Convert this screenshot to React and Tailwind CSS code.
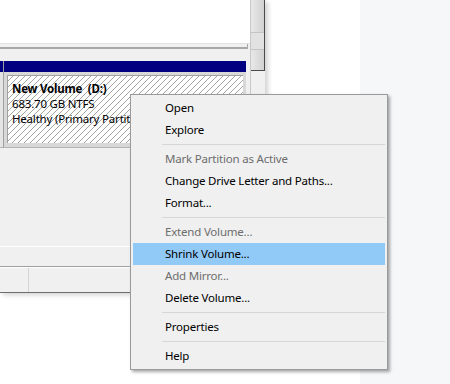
import React from "react";

const items = [
  { t: "Open" },
  { t: "Explore" },
  { sep: true },
  { t: "Mark Partition as Active", d: true },
  { t: "Change Drive Letter and Paths..." },
  { t: "Format..." },
  { sep: true },
  { t: "Extend Volume...", d: true },
  { t: "Shrink Volume...", h: true },
  { t: "Add Mirror...", d: true },
  { t: "Delete Volume..." },
  { sep: true },
  { t: "Properties" },
  { sep: true },
  { t: "Help" },
];

export default function App() {
  return (
    <div className="relative flex w-[450px] h-[384px] overflow-hidden bg-white font-['Noto_Sans',sans-serif] text-[11.5px] tracking-[-0.2px] text-black">
      <div className="w-[360px] bg-white">
        <div className="flex w-[265px] h-[293px] bg-[#f0f0f0] border-b border-[#6e6e6e] shadow-[3px_2px_5px_rgba(0,0,0,0.18)]">
          <div className="w-[251px] flex flex-col border-r border-[#c8c8c8]">
            <div className="h-[44px] bg-white border-b border-[#e3e3e3]" />
            <div className="h-[3px] flex justify-end">
              <div className="w-px mr-[2px] bg-[#a8a8a8]" />
            </div>
            <div className="h-[2px] bg-[#a8a8a8] mr-[2px]" />
            <div className="h-[12px]" />
            <div className="h-[87px] flex">
              <div className="w-[3px] flex flex-col">
                <div className="h-[11px] bg-[#000080]" />
                <div className="flex-1 bg-[#e4e4e4] border-b border-[#b4b4b4]" />
              </div>
              <div className="w-px bg-[#a0a0a0]" />
              <div className="w-[242px] flex flex-col">
                <div className="h-[11px] bg-[#000080]" />
                <div className="flex-1 bg-[#d8d8d8] px-[3px] pt-[3px] pb-[4px] border-b border-[#b4b4b4]">
                  <div className="h-full border-l border-t border-[#a0a0a0] bg-[repeating-linear-gradient(135deg,#ffffff_0px,#ffffff_3.2px,#a4a4a4_3.2px,#a4a4a4_4.24px)] pl-[4px] pt-[5px] leading-[15px] overflow-hidden whitespace-nowrap">
                    <div className="font-bold">New Volume&nbsp; (D:)</div>
                    <div>683.70 GB NTFS</div>
                    <div>Healthy (Primary Partition)</div>
                  </div>
                </div>
              </div>
            </div>
            <div className="flex-1 flex flex-col">
              <div className="h-[98px]" />
              <div className="h-px bg-white" />
              <div className="h-[19px]" />
              <div className="h-px bg-[#a0a0a0]" />
              <div className="h-px bg-white" />
              <div className="flex-1 flex">
                <div className="w-[29px] border-r border-[#d4d4d4]" />
              </div>
            </div>
          </div>
          <div className="w-[14px] flex flex-col">
            <div className="h-[71px] flex flex-col border-r border-b border-[#4a4a4a] bg-[linear-gradient(90deg,#e8e8e8,#d2d2d2)]">
              <div className="h-[33px] border-b border-[#c4c4c4]" />
              <div className="h-[17px] border-b border-[#c4c4c4] bg-[#e2e2e2]" />
            </div>
          </div>
        </div>
      </div>
      <div className="flex-1 bg-[#f6f7f9]" />

      <div className="absolute left-[130px] top-[94px] w-[258px] bg-[#f0f0f0] border border-[#9a9a9a] p-[2px] shadow-[2px_2px_3px_rgba(0,0,0,0.35)]">
        {items.map((it, i) =>
          it.sep ? (
            <div key={i} className="h-[7px] flex items-center pl-[29px]">
              <div className="h-px w-full bg-[#d7d7d7]" />
            </div>
          ) : (
            <div
              key={i}
              className={
                "h-[22px] flex items-center pl-[32px] whitespace-nowrap " +
                (it.h ? "bg-[#91c9f7] " : "") +
                (it.d ? "text-[#6d6d6d]" : "text-black")
              }
            >
              {it.t}
            </div>
          )
        )}
      </div>
    </div>
  );
}
